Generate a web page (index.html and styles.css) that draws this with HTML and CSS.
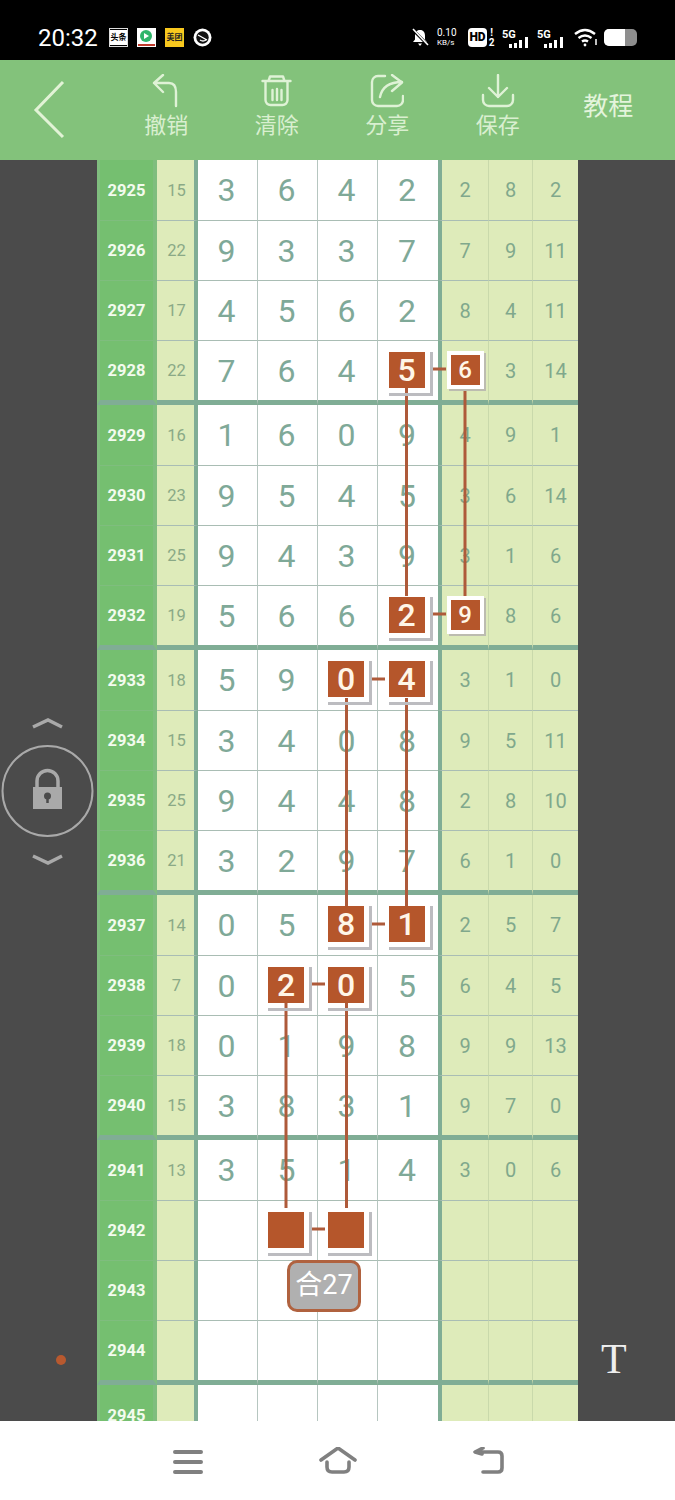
FILE: index.html
```html
<!DOCTYPE html>
<html lang="zh">
<head>
    <meta charset="UTF-8">
    <meta name="viewport" content="width=device-width, initial-scale=1.0">
    <title>排列五</title>
    <link rel="stylesheet" href="styles.css">
</head>
<body>
    <div class="status-bar">
        <span class="clock">20:32</span>
        <span class="app-icon app-news">头条</span>
        <span class="app-icon app-video"><svg width="19" height="19" viewBox="0 0 19 19"><circle cx="9" cy="8" r="6" fill="#2fb56a"/><path d="M7 5l5 3-5 3z" fill="#fff"/><path d="M1 17h17" stroke="#c0392b" stroke-width="2"/></svg></span>
        <span class="app-icon app-food">美团</span>
        <span class="app-icon app-round"><svg width="19" height="19" viewBox="0 0 19 19"><circle cx="9.5" cy="9.5" r="9" fill="#fff"/><circle cx="9.5" cy="9.5" r="6.2" fill="#111"/><path d="M5 7l9 5M7 12q3 2 6 0" stroke="#fff" stroke-width="1.4" fill="none"/></svg></span>

        <span class="status-right">
            <svg class="bell" width="18" height="19" viewBox="0 0 18 19"><path d="M9 2c-3.500 0-5 2.500-5 5.500v4L2 14h14l-2-2.500v-4C14 4.500 12.500 2 9 2zM7 15.500h4L9 18z" fill="#fff"/><path d="M1 1l16 16" stroke="#000" stroke-width="3"/><path d="M2 1l15 16" stroke="#fff" stroke-width="1.600"/></svg>
            <span class="speed"><b>0.10</b><b class="speed-unit">KB/s</b></span>
            <span class="hd">HD</span>
            <span class="sim"><b>!</b><b>2</b></span>
            <svg class="signal" width="29" height="20" viewBox="0 0 29 20"><text x="0" y="9.500" class="signal-text">5G</text><path d="M7 16h3v4H7zM12 15h3v5h-3zM17 12h3v8h-3zM23 9h3v11h-3z" fill="#fff"/></svg>
            <svg class="signal" width="29" height="20" viewBox="0 0 29 20"><text x="0" y="9.500" class="signal-text">5G</text><path d="M7 16h3v4H7zM12 15h3v5h-3zM17 12h3v8h-3zM23 9h3v11h-3z" fill="#fff"/></svg>
            <svg class="wifi" width="24" height="19" viewBox="0 0 24 19" fill="none" stroke="#fff" stroke-width="2.400"><path d="M1 6q10-8 20 0M4.500 10q6.500-5 13 0M8 13.500q3-2 6 0"/><circle cx="11" cy="17" r="1.400" fill="#fff" stroke="none"/><path d="M22 11v6" stroke-width="1.500"/></svg>
            <span class="battery"><span class="battery-level"></span></span>
        </span>
    </div>

    <div class="toolbar">
        <a class="back-btn"><svg width="36" height="60" viewBox="0 0 36 60" fill="none" stroke="#e2f3d6" stroke-width="3"><path d="M31 2L4 30l27 27"/></svg></a>
        <a class="tool">
            <svg width="34" height="34" viewBox="0 0 34 34" fill="none" stroke="#dff2d6" stroke-width="2.400" stroke-linecap="round" stroke-linejoin="round"><path d="M14 1L5 9l9 9M5 9h15q7 0 7 9v14"/></svg>
            <span>撤销</span>
        </a>
        <a class="tool">
            <svg width="34" height="34" viewBox="0 0 34 34" fill="none" stroke="#dff2d6" stroke-width="2.400" stroke-linecap="round" stroke-linejoin="round"><path d="M2.500 7h28M8.500 7L10 2.500h13L24.500 7M5.500 7v19a5 5 0 0 0 5 5h12a5 5 0 0 0 5-5V7M12.500 16v10M17 15v11M21.500 16v10"/></svg>
            <span>清除</span>
        </a>
        <a class="tool">
            <svg width="34" height="34" viewBox="0 0 34 34" fill="none" stroke="#dff2d6" stroke-width="2.400" stroke-linecap="round" stroke-linejoin="round"><path d="M15 2H8a6 6 0 0 0-6 6v18a6 6 0 0 0 6 6h19a6 6 0 0 0 6-6v-4M10 23q3-15 22-15M22 1l10 7.500L22 17"/></svg>
            <span>分享</span>
        </a>
        <a class="tool">
            <svg width="34" height="34" viewBox="0 0 34 34" fill="none" stroke="#dff2d6" stroke-width="2.400" stroke-linecap="round" stroke-linejoin="round"><path d="M17 1v22M8 14l9 9 9-9M2 21v5a6 6 0 0 0 6 6h18a6 6 0 0 0 6-6v-5"/></svg>
            <span>保存</span>
        </a>
        <a class="tool tool-text">教程</a>
    </div>

    <div class="main">
        <div class="rail rail-left">
            <svg class="lock-control" width="97" height="150" viewBox="0 716 97 150" fill="none" stroke="#a9a9a9">
                <path d="M33 727l15-7 14 7" stroke-width="3.500"/>
                <circle cx="47.500" cy="791" r="45" stroke-width="2"/>
                <path d="M37 788v-7a10.500 10.500 0 0 1 21 0v7" stroke-width="3.500"/>
                <rect x="33" y="787" width="29" height="22" fill="#a9a9a9" stroke="none"/>
                <circle cx="47.500" cy="796" r="3.500" fill="#4b4b4b" stroke="none"/>
                <path d="M47.500 797v6" stroke="#4b4b4b" stroke-width="2.500"/>
                <path d="M33 856l15 7 14-7" stroke-width="3.500"/>
            </svg>
            <span class="rec-dot"></span>
        </div>

        <div class="board">
            <div class="row"><span class="seq">2925</span><span class="sum">15</span><span class="num">3</span><span class="num">6</span><span class="num">4</span><span class="num">2</span><span class="val">2</span><span class="val">8</span><span class="val">2</span></div>
            <div class="row"><span class="seq">2926</span><span class="sum">22</span><span class="num">9</span><span class="num">3</span><span class="num">3</span><span class="num">7</span><span class="val">7</span><span class="val">9</span><span class="val">11</span></div>
            <div class="row"><span class="seq">2927</span><span class="sum">17</span><span class="num">4</span><span class="num">5</span><span class="num">6</span><span class="num">2</span><span class="val">8</span><span class="val">4</span><span class="val">11</span></div>
            <div class="row row-end"><span class="seq">2928</span><span class="sum">22</span><span class="num">7</span><span class="num">6</span><span class="num">4</span><span class="num"><i class="chip">5</i></span><span class="val"><i class="chip chip-small">6</i></span><span class="val">3</span><span class="val">14</span></div>

            <div class="row"><span class="seq">2929</span><span class="sum">16</span><span class="num">1</span><span class="num">6</span><span class="num">0</span><span class="num">9</span><span class="val">4</span><span class="val">9</span><span class="val">1</span></div>
            <div class="row"><span class="seq">2930</span><span class="sum">23</span><span class="num">9</span><span class="num">5</span><span class="num">4</span><span class="num">5</span><span class="val">3</span><span class="val">6</span><span class="val">14</span></div>
            <div class="row"><span class="seq">2931</span><span class="sum">25</span><span class="num">9</span><span class="num">4</span><span class="num">3</span><span class="num">9</span><span class="val">3</span><span class="val">1</span><span class="val">6</span></div>
            <div class="row row-end"><span class="seq">2932</span><span class="sum">19</span><span class="num">5</span><span class="num">6</span><span class="num">6</span><span class="num"><i class="chip">2</i></span><span class="val"><i class="chip chip-small">9</i></span><span class="val">8</span><span class="val">6</span></div>

            <div class="row"><span class="seq">2933</span><span class="sum">18</span><span class="num">5</span><span class="num">9</span><span class="num"><i class="chip">0</i></span><span class="num"><i class="chip">4</i></span><span class="val">3</span><span class="val">1</span><span class="val">0</span></div>
            <div class="row"><span class="seq">2934</span><span class="sum">15</span><span class="num">3</span><span class="num">4</span><span class="num">0</span><span class="num">8</span><span class="val">9</span><span class="val">5</span><span class="val">11</span></div>
            <div class="row"><span class="seq">2935</span><span class="sum">25</span><span class="num">9</span><span class="num">4</span><span class="num">4</span><span class="num">8</span><span class="val">2</span><span class="val">8</span><span class="val">10</span></div>
            <div class="row row-end"><span class="seq">2936</span><span class="sum">21</span><span class="num">3</span><span class="num">2</span><span class="num">9</span><span class="num">7</span><span class="val">6</span><span class="val">1</span><span class="val">0</span></div>

            <div class="row"><span class="seq">2937</span><span class="sum">14</span><span class="num">0</span><span class="num">5</span><span class="num"><i class="chip">8</i></span><span class="num"><i class="chip">1</i></span><span class="val">2</span><span class="val">5</span><span class="val">7</span></div>
            <div class="row"><span class="seq">2938</span><span class="sum">7</span><span class="num">0</span><span class="num"><i class="chip">2</i></span><span class="num"><i class="chip">0</i></span><span class="num">5</span><span class="val">6</span><span class="val">4</span><span class="val">5</span></div>
            <div class="row"><span class="seq">2939</span><span class="sum">18</span><span class="num">0</span><span class="num">1</span><span class="num">9</span><span class="num">8</span><span class="val">9</span><span class="val">9</span><span class="val">13</span></div>
            <div class="row row-end"><span class="seq">2940</span><span class="sum">15</span><span class="num">3</span><span class="num">8</span><span class="num">3</span><span class="num">1</span><span class="val">9</span><span class="val">7</span><span class="val">0</span></div>

            <div class="row"><span class="seq">2941</span><span class="sum">13</span><span class="num">3</span><span class="num">5</span><span class="num">1</span><span class="num">4</span><span class="val">3</span><span class="val">0</span><span class="val">6</span></div>
            <div class="row"><span class="seq">2942</span><span class="sum"></span><span class="num"></span><span class="num"><i class="chip"></i></span><span class="num"><i class="chip"></i></span><span class="num"></span><span class="val"></span><span class="val"></span><span class="val"></span></div>
            <div class="row"><span class="seq">2943</span><span class="sum"></span><span class="num"></span><span class="num"></span><span class="num"></span><span class="num"></span><span class="val"></span><span class="val"></span><span class="val"></span></div>
            <div class="row row-end"><span class="seq">2944</span><span class="sum"></span><span class="num"></span><span class="num"></span><span class="num"></span><span class="num"></span><span class="val"></span><span class="val"></span><span class="val"></span></div>

            <div class="row"><span class="seq">2945</span><span class="sum"></span><span class="num"></span><span class="num"></span><span class="num"></span><span class="num"></span><span class="val"></span><span class="val"></span><span class="val"></span></div>

            <!-- drawn in page coordinates -->
            <svg class="links" width="481" height="1261" viewBox="97 160 481 1261" stroke="#ae5a3a" stroke-width="3">
                <path d="M406.500 388V596M465 390V596M430 369h16M430 614h16"/>
                <path d="M346.500 698V907M406.500 698V907M370 679h15M370 924h15"/>
                <path d="M286 1003V1208M346.500 1003V1208M310 984h15M310 1229h15"/>
            </svg>
            <div class="total">合27</div>
        </div>

        <div class="rail rail-right">
            <span class="text-tool">T</span>
        </div>
    </div>

    <div class="nav-bar">
        <a class="nav-btn"><svg width="36" height="30" viewBox="0 0 36 30" fill="none" stroke="#808080" stroke-width="4" stroke-linecap="round"><path d="M5 5h26M5 15h26M5 25h26"/></svg></a>
        <a class="nav-btn"><svg width="40" height="30" viewBox="0 0 40 30" fill="none" stroke="#808080" stroke-width="3.600" stroke-linecap="round" stroke-linejoin="round"><path d="M3 13L20 1l17 12M9 15v5q0 5 5 5h12q5 0 5-5v-5"/></svg></a>
        <a class="nav-btn"><svg width="36" height="30" viewBox="0 0 36 30" fill="none" stroke="#808080" stroke-width="3.600" stroke-linecap="round" stroke-linejoin="round"><path d="M6 5h22q4 0 4 4v12q0 4-4 4H13M13 1L5 5l7 2"/></svg></a>
    </div>
</body>
</html>
```

FILE: styles.css
```css
* {
    box-sizing: border-box;
}
body {
    margin: 0;
    width: 675px;
    height: 1500px;
    overflow: hidden;
    font-family: Roboto, "Noto Sans CJK SC", sans-serif;
    background-color: #fff;
}
svg {
    display: block;
}

/* status bar */
.status-bar {
    display: flex;
    align-items: center;
    height: 60px;
    padding: 15px 0 0 38px;
    background-color: #000;
    color: #fff;
}
.clock {
    width: 71px;
    font-size: 24px;
}
.app-icon {
    display: flex;
    align-items: center;
    justify-content: center;
    width: 19px;
    height: 19px;
    margin-right: 9px;
    font-size: 8px;
    font-weight: 700;
    line-height: 1;
    white-space: nowrap;
    overflow: hidden;
}
.app-news {
    background-color: #fff;
    color: #000;
    border-top: 2px solid #000;
    border-bottom: 2px solid #000;
    outline: 1px solid #ddd;
    outline-offset: -1px;
}
.app-video {
    background-color: #fff;
}
.app-food {
    background-color: #f8c81e;
    color: #222;
}
.status-right {
    display: flex;
    align-items: center;
    margin-left: 190px;
}
.speed {
    display: flex;
    flex-direction: column;
    width: 23px;
    margin-left: 8px;
    font-size: 10px;
    line-height: 10px;
}
.speed b {
    font-weight: 400;
    white-space: nowrap;
}
.speed-unit {
    font-size: 8px;
}
.hd {
    width: 19px;
    height: 19px;
    margin-left: 8px;
    border-radius: 4px;
    background-color: #fff;
    color: #000;
    font-size: 12px;
    font-weight: 900;
    line-height: 19px;
    text-align: center;
}
.sim {
    display: flex;
    flex-direction: column;
    width: 7px;
    margin-left: 1px;
    font-size: 10px;
    line-height: 10px;
    text-align: center;
}
.signal {
    margin-left: 7px;
}
.signal + .signal {
    margin-left: 6px;
}
.signal-text {
    fill: #fff;
    font-size: 11px;
    font-weight: 700;
}
.wifi {
    margin-left: 8px;
}
.battery {
    width: 33px;
    height: 17px;
    margin-left: 6px;
    border-radius: 5px;
    background-color: #8e8e8e;
    overflow: hidden;
}
.battery-level {
    display: block;
    width: 21px;
    height: 100%;
    background-color: #fff;
}

/* toolbar */
.toolbar {
    display: flex;
    height: 100px;
    background-color: #83c27b;
    color: #d9efd0;
}
.back-btn {
    width: 111px;
    padding: 20px 0 0 32px;
}
.tool {
    display: flex;
    flex-direction: column;
    align-items: center;
    width: 110.500px;
    padding-top: 14px;
    font-size: 22px;
    line-height: 24px;
}
.tool span {
    margin-top: 6px;
}
.tool-text {
    padding-top: 32px;
    font-size: 25px;
    line-height: 30px;
    color: #e4f4dc;
}

/* side rails */
.main {
    display: flex;
    height: 1261px;
    overflow: hidden;
    background-color: #4b4b4b;
}
.rail {
    width: 97px;
}
.rail-left {
    padding-top: 556px;
}
.rec-dot {
    display: block;
    width: 10px;
    height: 10px;
    margin: 489px 0 0 56px;
    border-radius: 50%;
    background-color: #b8592f;
}
.rail-right {
    padding: 1174px 0 0 23px;
}
.text-tool {
    font-family: "Liberation Serif", serif;
    font-size: 42px;
    line-height: 50px;
    color: #eee;
}

/* chart */
.board {
    position: relative;
    width: 481px;
}
.row {
    display: grid;
    grid-template-columns: 60px 41px 60px 60px 60px 60px 51px 44px 45px;
    height: 60px;
}
.row span {
    display: flex;
    align-items: center;
    justify-content: center;
    border-top: 1px solid #a9bdb4;
}
.row:first-child span,
.row-end + .row span {
    border-top: 0;
}
.row-end {
    height: 65px;
}
.row-end span {
    border-bottom: 5px solid #80ad95;
}
.seq {
    background-color: #75bf70;
    border-left: 3px solid #7fbd7e;
    border-right: 4px solid #7fbd7e;
    border-top-color: #7fbd7e !important;
    color: #f3fbee;
    font-size: 16.500px;
    font-weight: 700;
}
.sum {
    padding-left: 2px;
    background-color: #deebba;
    border-right: 4px solid #80ad95;
    color: #8aa986;
    font-size: 16.500px;
}
.num {
    padding-right: 2px;
    background-color: #fff;
    border-right: 1px solid #b6c6c0;
    color: #7fa998;
    font-size: 32px;
}
.num:nth-child(6) {
    border-right: 0;
}
.val {
    background-color: #deebba;
    border-right: 1px solid #c9d9ab;
    color: #80a88c;
    font-size: 20px;
}
.num + .val {
    border-left: 4px solid #80ad95;
}
.val:last-child {
    border-right: 0;
}

/* picked numbers */
.chip {
    position: relative;
    z-index: 2;
    display: flex;
    align-items: center;
    justify-content: center;
    width: 36px;
    height: 36px;
    margin: 0 1px 2px 0;
    background-color: #b5562b;
    color: #fff6e8;
    font-size: 32px;
    font-style: normal;
    font-weight: 500;
}
.chip::after {
    content: "";
    position: absolute;
    top: 0;
    left: 0;
    right: -8px;
    bottom: -8px;
    border-right: 3px solid #bcbcc0;
    border-bottom: 3px solid #bcbcc0;
    z-index: -1;
}
.chip-small {
    width: 37px;
    height: 38px;
    margin: 0 0 2px 0;
    border: 4px solid #fff;
    font-size: 24px;
    box-shadow: 2px 2px 0 #bcbcb0;
}
.chip-small::after {
    display: none;
}
.links {
    position: absolute;
    top: 0;
    left: 0;
    z-index: 1;
}
.total {
    position: absolute;
    z-index: 2;
    top: 1100px;
    left: 190px;
    width: 74px;
    height: 52px;
    border: 3px solid #b0623f;
    border-radius: 10px;
    background-color: #b0b0b0;
    color: #fff;
    font-size: 27px;
    line-height: 44px;
    text-align: center;
}

/* bottom nav */
.nav-bar {
    display: flex;
    justify-content: center;
    height: 79px;
    padding-top: 26px;
    background-color: #fff;
}
.nav-btn {
    display: flex;
    justify-content: center;
    width: 150px;
}
```
